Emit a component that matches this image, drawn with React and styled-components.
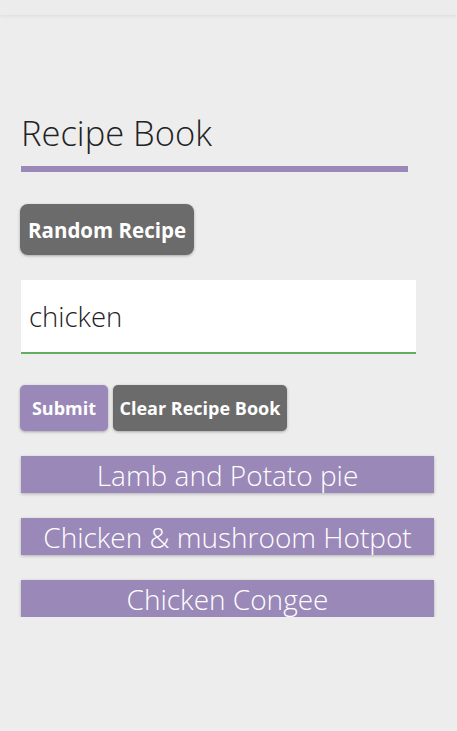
import React, { useState } from "react"
import styled, { createGlobalStyle } from "styled-components"

const GlobalStyle = createGlobalStyle`
  body {
    margin: 0;
    background: #ededed;
    font-family: "Open Sans", "Noto Sans", sans-serif;
  }
`

const TopBar = styled.div`
  height: 15px;
  background: #ececec;
  box-shadow: 0 1px 4px rgba(0, 0, 0, 0.08);
`

const Main = styled.div`
  padding: 96px 0 0 21px;
  display: flex;
  flex-direction: column;
  align-items: flex-start;
`

const Title = styled.h1`
  margin: 0;
  width: 387px;
  height: 55px;
  font-size: 34.5px;
  font-weight: 300;
  color: #222;
  line-height: 44px;
  border-bottom: 6px solid #9a88b8;
`

const Button = styled.button`
  font-family: "Open Sans", "Noto Sans", sans-serif;
  font-weight: 700;
  color: #fff;
  border: none;
  cursor: pointer;
  background: ${p => (p.$purple ? "#9a88b8" : "#6b6b6b")};
  border-radius: ${p => (p.$big ? "8px" : "5px")};
  font-size: ${p => (p.$big ? "20.5px" : "18px")};
  height: ${p => (p.$big ? "51px" : "46px")};
  min-width: ${p => (p.$purple ? "88px" : "0")};
  padding: 0 ${p => (p.$big ? "8px" : "6.5px")};
  box-shadow: 0 1px 3px rgba(0, 0, 0, 0.3);
`

const RandomWrap = styled.div`
  margin: 32px 0 0 -1px;
`

const SearchInput = styled.input`
  margin-top: 25px;
  width: 395px;
  height: 74px;
  box-sizing: border-box;
  border: none;
  border-bottom: 2px solid #62ad62;
  background: #fff;
  padding: 0 8px;
  font-family: "Open Sans", "Noto Sans", sans-serif;
  font-weight: 300;
  font-size: 27.5px;
  color: #222;
  outline: none;
`

const ButtonRow = styled.div`
  display: flex;
  gap: 5px;
  margin: 31px 0 0 -1px;
`

const RecipeList = styled.div`
  display: flex;
  flex-direction: column;
  gap: 25px;
  margin-top: 25px;
`

const Recipe = styled.div`
  width: 413px;
  height: 37px;
  background: #9a88b8;
  color: #fff;
  font-weight: 300;
  font-size: 28px;
  line-height: 39px;
  text-align: center;
  box-shadow: 0 1px 3px rgba(0, 0, 0, 0.25);
  white-space: nowrap;
`

const recipes = ["Lamb and Potato pie", "Chicken & mushroom Hotpot", "Chicken Congee"]

const App = () => {
  const [query, setQuery] = useState("chicken")

  return (
    <>
      <GlobalStyle />
      <TopBar />
      <Main>
        <Title>Recipe Book</Title>
        <RandomWrap>
          <Button $big>Random Recipe</Button>
        </RandomWrap>
        <SearchInput value={query} onChange={e => setQuery(e.target.value)} />
        <ButtonRow>
          <Button $purple>Submit</Button>
          <Button>Clear Recipe Book</Button>
        </ButtonRow>
        <RecipeList>
          {recipes.map(r => (
            <Recipe key={r}>{r}</Recipe>
          ))}
        </RecipeList>
      </Main>
    </>
  )
}

export default App
